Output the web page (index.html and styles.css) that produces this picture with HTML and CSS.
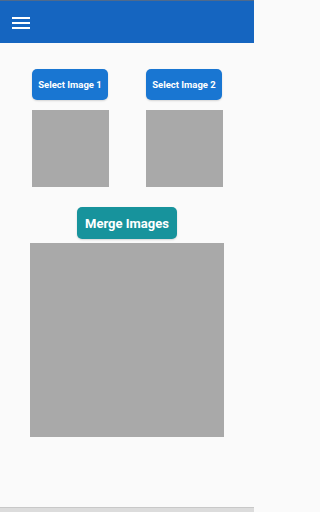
FILE: index.html
```
<!DOCTYPE html>
<html>
<head>
<meta charset="utf-8">
<meta name="viewport" content="width=254">
<link rel="stylesheet" href="styles.css">
</head>
<body>
<header class="appbar">
  <button class="menu" aria-label="Menu">
    <svg width="18" height="12" viewBox="0 0 18 12"><rect x="0" y="0" width="18" height="2" fill="#fff"/><rect x="0" y="5" width="18" height="2" fill="#fff"/><rect x="0" y="10" width="18" height="2" fill="#fff"/></svg>
  </button>
</header>
<main class="content">
  <div class="pickers">
    <div class="picker">
      <button class="btn-select">Select Image 1</button>
      <div class="thumb"></div>
    </div>
    <div class="picker">
      <button class="btn-select">Select Image 2</button>
      <div class="thumb"></div>
    </div>
  </div>
  <button class="btn-merge">Merge Images</button>
  <div class="result"></div>
</main>
<footer class="navbar"></footer>
</body>
</html>
```
FILE: styles.css
```
html {
  margin: 0;
  padding: 0;
  background: #fafafa;
}
body {
  margin: 0;
  padding: 0;
  width: 254px;
  height: 512px;
  background: #fafafa;
  font-family: Roboto, "Noto Sans", sans-serif;
  overflow: hidden;
  display: flex;
  flex-direction: column;
}
.appbar {
  height: 42px;
  border-top: 1px solid #4f6a8c;
  background: #1565c0;
  display: flex;
  align-items: center;
  padding-left: 12px;
  flex: none;
}
.menu {
  background: none;
  border: 0;
  padding: 0;
  width: 18px;
  height: 12px;
  display: block;
  margin-top: 2px;
}
.menu svg { display: block; }
.content {
  flex: 1;
  display: flex;
  flex-direction: column;
  align-items: center;
  padding-top: 26px;
}
.pickers {
  display: flex;
  justify-content: center;
  gap: 37px;
}
.picker {
  display: flex;
  flex-direction: column;
  align-items: center;
  gap: 10px;
}
.btn-select {
  width: 76px;
  height: 31px;
  border: 0;
  border-radius: 5px;
  background: #1976d2;
  color: #fff;
  font-family: Roboto, sans-serif;
  font-weight: 700;
  font-size: 9.5px;
  padding: 0;
  box-shadow: 0 1px 2px rgba(0,0,0,0.15);
}
.thumb {
  width: 77px;
  height: 77px;
  background: #a9a9a9;
}
.btn-merge {
  margin-top: 20px;
  width: 100px;
  height: 32px;
  border: 0;
  border-radius: 5px;
  background: #17939c;
  color: #fff;
  font-family: Roboto, sans-serif;
  font-weight: 700;
  font-size: 13px;
  padding: 0;
  box-shadow: 0 1px 2px rgba(0,0,0,0.15);
}
.result {
  margin-top: 4px;
  width: 194px;
  height: 194px;
  background: #a9a9a9;
}
.navbar {
  flex: none;
  height: 4px;
  border-top: 1px solid #c8c8c8;
  background: #dcdcdc;
}
```
